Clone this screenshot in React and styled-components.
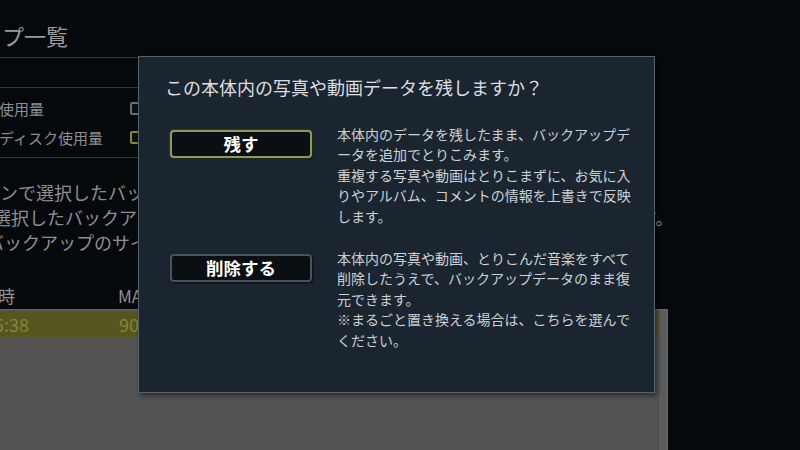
import styled, { createGlobalStyle } from 'styled-components';

const GlobalStyle = createGlobalStyle`
  html, body {
    margin: 0;
    padding: 0;
    background: #05090c;
  }
  body {
    font-family: 'Noto Sans CJK JP', 'Noto Sans', sans-serif;
  }
`;

const Screen = styled.div`
  position: relative;
  width: 800px;
  height: 450px;
  overflow: hidden;
  background: #05090c;
`;

/* ---------- page behind the dialog ---------- */

const Page = styled.div`
  width: 668px;
  height: 450px;
  box-sizing: border-box;
  padding-top: 20px;
  display: flex;
  flex-direction: column;
  color: #8c8f92;
`;

const Heading = styled.h1`
  margin: 0 0 0 -108px;
  font-size: 22px;
  line-height: 30px;
  font-weight: 400;
  color: #9a9c9e;
  white-space: nowrap;
`;

const Rule = styled.div`
  width: 640px;
  height: 1px;
  margin-top: ${p => p.$gap || 0}px;
  background: #33383d;
`;

const SubBar = styled.div`
  height: 29px;
`;

const UsageList = styled.div`
  padding: 6px 0 5px;
  display: flex;
  flex-direction: column;
`;

const UsageRow = styled.div`
  height: 29px;
  display: grid;
  grid-template-columns: 130px 1fr;
  align-items: center;
`;

const UsageLabel = styled.span`
  margin-left: -91px;
  font-size: 15px;
  white-space: nowrap;
`;

const UsageBar = styled.div`
  width: 300px;
  height: 13px;
  box-sizing: border-box;
  border: 2px solid ${p => p.$tone};
  border-radius: 2px;
  background: #0c1013;
`;

const Notices = styled.div`
  margin-top: 22px;
  display: flex;
  flex-direction: column;
`;

const NoticeLine = styled.p`
  margin: 0 0 0 ${p => p.$shift}px;
  font-size: 18px;
  line-height: 25px;
  white-space: nowrap;
`;

const Table = styled.div`
  margin: 26px 0 0 -106px;
  flex: 1;
  display: flex;
  flex-direction: column;
`;

const HeadRow = styled.div`
  height: 28px;
  display: grid;
  grid-template-columns: 224px 1fr;
  align-items: center;
  font-size: 17px;
  color: #8e9194;
`;

const HeadCell = styled.span`
  padding-left: ${p => p.$indent || 0}px;
  white-space: nowrap;
`;

const ListBody = styled.div`
  flex: 1;
  display: flex;
  background: #545454;
  border: 1px solid #676767;
  border-bottom: none;
`;

const Rows = styled.div`
  flex: 1;
  padding-top: 1px;
`;

const Row = styled.div`
  height: 26px;
  display: grid;
  grid-template-columns: 224px 1fr;
  align-items: center;
  font-size: 18px;
  background: ${p => (p.$selected ? '#57561f' : 'transparent')};
  color: ${p => (p.$selected ? '#86843a' : '#6a6a6a')};
  border-bottom: 1px dotted #5e5e5e;
  white-space: nowrap;
`;

const Cell = styled.span`
  margin-left: ${p => p.$shift || 0}px;
`;

const ScrollTrack = styled.div`
  width: 8px;
  background: #5c5c5c;
  border-left: 1px solid #4c4c4c;
`;

/* ---------- dialog ---------- */

const Dialog = styled.section`
  position: absolute;
  left: 138px;
  top: 56px;
  width: 517px;
  height: 337px;
  box-sizing: border-box;
  padding: 18px 0 0 26px;
  background: #1a2530;
  border: 1px solid #56636d;
  box-shadow: 2px 3px 5px rgba(0, 0, 0, 0.45);
  display: flex;
  flex-direction: column;
`;

const DialogTitle = styled.h2`
  margin: 0;
  font-size: 18px;
  line-height: 24px;
  font-weight: 400;
  color: #dcdfe2;
  white-space: nowrap;
`;

const Options = styled.div`
  margin-top: 25px;
  padding-left: 5px;
  display: flex;
  flex-direction: column;
  gap: 22px;
`;

const Option = styled.div`
  display: grid;
  grid-template-columns: 142px 300px;
  column-gap: 25px;
  align-items: start;
`;

const ChoiceButton = styled.button`
  margin-top: 5.5px;
  height: 28px;
  box-sizing: border-box;
  padding: 0;
  border: 2px solid ${p => (p.$focused ? '#8d9a56' : '#49535c')};
  border-radius: 4px;
  background: #0a0f13;
  box-shadow: ${p =>
    p.$focused
      ? '0 0 2px rgba(150, 165, 90, 0.55), 1px 1px 2px rgba(0, 0, 0, 0.6)'
      : '1px 1px 2px rgba(0, 0, 0, 0.7)'};
  color: #ffffff;
  font: 700 17.5px/24px 'Noto Sans CJK JP', 'Noto Sans', sans-serif;
  cursor: pointer;
`;

const Description = styled.p`
  margin: 0;
  font-size: 14px;
  line-height: 20.4px;
  color: #cdd1d4;
  span {
    display: block;
    white-space: nowrap;
  }
`;

const options = [
  {
    label: '残す',
    focused: true,
    lines: [
      '本体内のデータを残したまま、バックアップデ',
      'ータを追加でとりこみます。',
      '重複する写真や動画はとりこまずに、お気に入',
      'りやアルバム、コメントの情報を上書きで反映',
      'します。',
    ],
  },
  {
    label: '削除する',
    focused: false,
    lines: [
      '本体内の写真や動画、とりこんだ音楽をすべて',
      '削除したうえで、バックアップデータのまま復',
      '元できます。',
      '※まるごと置き換える場合は、こちらを選んで',
      'ください。',
    ],
  },
];

const App = () => {
  return (
    <>
      <GlobalStyle />
      <Screen>
        <Page>
          <Heading>バックアップ一覧</Heading>
          <Rule $gap={7} />
          <SubBar />
          <Rule />
          <UsageList>
            <UsageRow>
              <UsageLabel>本体メモリー使用量</UsageLabel>
              <UsageBar $tone='#6a6e72' />
            </UsageRow>
            <UsageRow>
              <UsageLabel>外付けハードディスク使用量</UsageLabel>
              <UsageBar $tone='#86873a' />
            </UsageRow>
          </UsageList>
          <Rule />
          <Notices>
            <NoticeLine $shift={-108}>カーソルボタンで選択したバックアップデータの内容を確認できます。</NoticeLine>
            <NoticeLine $shift={-7}>選択したバックアップデータを本体にとりこみ、すべてのデータを元に復元します。</NoticeLine>
            <NoticeLine $shift={-14}>バックアップのサイズが大きい場合は、時間がかかることがあります。</NoticeLine>
          </Notices>
          <Table>
            <HeadRow>
              <HeadCell $indent={53}>作成日時</HeadCell>
              <HeadCell>MACアドレス</HeadCell>
            </HeadRow>
            <ListBody>
              <Rows>
                <Row $selected>
                  <Cell $shift={-9}>2014/05/12 15:38</Cell>
                  <Cell>90:03:B7:2A:11:5E</Cell>
                </Row>
              </Rows>
              <ScrollTrack />
            </ListBody>
          </Table>
        </Page>

        <Dialog>
          <DialogTitle>この本体内の写真や動画データを残しますか？</DialogTitle>
          <Options>
            {options.map(opt => (
              <Option key={opt.label}>
                <ChoiceButton $focused={opt.focused}>{opt.label}</ChoiceButton>
                <Description>
                  {opt.lines.map(line => (
                    <span key={line}>{line}</span>
                  ))}
                </Description>
              </Option>
            ))}
          </Options>
        </Dialog>
      </Screen>
    </>
  );
};

export default App;
